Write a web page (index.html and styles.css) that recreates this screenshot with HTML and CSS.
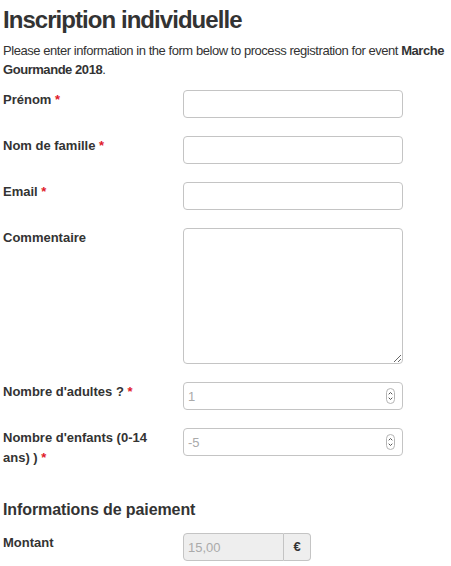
FILE: index.html
```html
<!DOCTYPE html>
<html lang="fr">
<head>
  <meta charset="UTF-8">
  <title>Inscription individuelle</title>
  <link rel="stylesheet" href="styles.css">
</head>
<body>

<div class="page">
  <h1>Inscription individuelle</h1>
  <p class="intro">Please enter information in the form below to process registration for event <strong>Marche<br>Gourmande 2018</strong>.</p>

  <form class="form-horizontal">
    <div class="control-group">
      <label class="control-label">Prénom <span class="required">*</span></label>
      <div class="controls"><input type="text" class="input-large"></div>
    </div>

    <div class="control-group">
      <label class="control-label">Nom de famille <span class="required">*</span></label>
      <div class="controls"><input type="text" class="input-large"></div>
    </div>

    <div class="control-group">
      <label class="control-label">Email <span class="required">*</span></label>
      <div class="controls"><input type="text" class="input-large"></div>
    </div>

    <div class="control-group">
      <label class="control-label">Commentaire</label>
      <div class="controls"><textarea class="input-large"></textarea></div>
    </div>

    <div class="control-group">
      <label class="control-label">Nombre d'adultes ? <span class="required">*</span></label>
      <div class="controls">
        <div class="number-field">
          <input type="text" class="input-large" placeholder="1">
          <svg class="spinner" width="9" height="16" viewBox="0 0 9 16">
            <rect x="0.5" y="0.5" width="8" height="15" rx="4" fill="#fff" stroke="#b5b5b5"/>
            <path d="M2.7 6.3 L4.5 4.5 L6.3 6.3" fill="none" stroke="#555" stroke-width="1"/>
            <path d="M2.7 9.7 L4.5 11.5 L6.3 9.7" fill="none" stroke="#555" stroke-width="1"/>
          </svg>
        </div>
      </div>
    </div>

    <div class="control-group">
      <label class="control-label">Nombre d'enfants (0-14 ans) ) <span class="required">*</span></label>
      <div class="controls">
        <div class="number-field">
          <input type="text" class="input-large" placeholder="-5">
          <svg class="spinner" width="9" height="16" viewBox="0 0 9 16">
            <rect x="0.5" y="0.5" width="8" height="15" rx="4" fill="#fff" stroke="#b5b5b5"/>
            <path d="M2.7 6.3 L4.5 4.5 L6.3 6.3" fill="none" stroke="#555" stroke-width="1"/>
            <path d="M2.7 9.7 L4.5 11.5 L6.3 9.7" fill="none" stroke="#555" stroke-width="1"/>
          </svg>
        </div>
      </div>
    </div>

    <h3 class="section-title">Informations de paiement</h3>

    <div class="control-group">
      <label class="control-label">Montant</label>
      <div class="controls">
        <div class="input-append">
          <input type="text" class="input-small" value="15,00" disabled>
          <span class="add-on">€</span>
        </div>
      </div>
    </div>
  </form>
</div>

</body>
</html>
```

FILE: styles.css
```css
body {
  font-family: "Liberation Sans", Arial, sans-serif;
  font-size: 13px;
  line-height: 20px;
  color: #333;
  background-color: #fff;
  margin: 0;
  padding: 0;
}
.page {
  padding: 0 0 0 3px;
}
h1 {
  font-size: 24px;
  line-height: 29px;
  font-weight: bold;
  letter-spacing: -0.95px;
  margin: 5px 0 7px;
  color: #333;
}
.intro {
  font-size: 13px;
  line-height: 19px;
  letter-spacing: -0.45px;
  white-space: nowrap;
  margin: 0 0 11px;
}
.form-horizontal {
  display: flex;
  flex-direction: column;
  gap: 18px;
}
.control-group {
  display: flex;
  align-items: flex-start;
}
.control-label {
  width: 160px;
  flex: none;
  margin-right: 20px;
  font-weight: bold;
}
.required {
  color: #e0192a;
}
.controls {
  flex: none;
}
input,
textarea {
  font-family: "Liberation Sans", Arial, sans-serif;
  font-size: 13px;
  color: #555;
  box-sizing: border-box;
  border: 1px solid #c4c4c4;
  border-radius: 4px;
  padding: 4px;
  background: #fff;
  margin: 0;
  display: block;
}
input::placeholder {
  color: #aaa;
}
.input-large {
  width: 220px;
  height: 28px;
}
textarea.input-large {
  height: 136px;
  resize: vertical;
}
.number-field {
  position: relative;
}
.spinner {
  position: absolute;
  right: 8px;
  top: 6px;
}
.section-title {
  font-size: 16px;
  line-height: 20px;
  font-weight: bold;
  letter-spacing: -0.1px;
  margin: 14px 0 -5px;
  color: #333;
}
.input-append {
  display: flex;
}
.input-small {
  width: 101px;
  height: 28px;
  border-radius: 4px 0 0 4px;
}
input[disabled] {
  background-color: #eee;
  color: #aaa;
}
.add-on {
  box-sizing: border-box;
  width: 27px;
  height: 28px;
  line-height: 26px;
  text-align: center;
  border: 1px solid #c4c4c4;
  border-left: none;
  border-radius: 0 4px 4px 0;
  background-color: #eee;
  font-weight: bold;
  color: #333;
}
```
